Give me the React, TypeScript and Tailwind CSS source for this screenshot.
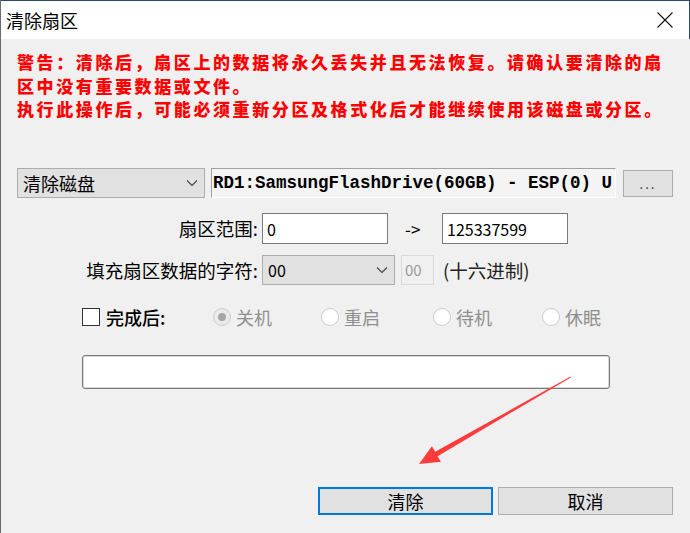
const ui = { fontFamily: '"Noto Sans CJK SC", "Noto Sans", sans-serif' }
const mono = { fontFamily: '"Liberation Mono", "DejaVu Sans Mono", monospace' }

function Chevron() {
  return (
    <svg width="12" height="8" viewBox="0 0 12 8" className="shrink-0">
      <polyline points="1,1.5 6,6.5 11,1.5" fill="none" stroke="#444" strokeWidth="1.1" />
    </svg>
  )
}

function Radio({ label, checked }: { label: string; checked?: boolean }) {
  return (
    <div className="flex items-center">
      <span
        className={`flex h-[18px] w-[18px] items-center justify-center rounded-full border border-[#cccccc] ${
          checked ? 'bg-[#eaeaea]' : 'bg-white'
        }`}
      >
        {checked && <span className="h-[8px] w-[8px] rounded-full bg-[#a6a6a6]" />}
      </span>
      <span className="ml-[5px] text-[18px] leading-none text-[#8f8f8f]">{label}</span>
    </div>
  )
}

export default function App() {
  return (
    <div
      className="relative flex h-[533px] w-[690px] flex-col overflow-hidden border-l border-[#6b6b6b] bg-[#f0f0f0] text-black"
      style={ui}
    >
      {/* title bar */}
      <div className="flex h-[39px] shrink-0 items-center justify-between border-t border-r border-[#2b4a6b] bg-white pl-[5px] pr-[16px]">
        <span className="text-[18px] leading-none">清除扇区</span>
        <svg width="16" height="16" viewBox="0 0 16 16">
          <path d="M0.5 0.5 L15.5 15.5 M15.5 0.5 L0.5 15.5" stroke="#111" strokeWidth="1.1" />
        </svg>
      </div>

      <div className="flex flex-col pl-[16px]">
        <div className="mt-[11px] whitespace-nowrap text-[17px] font-black leading-[23.5px] tracking-[2.6px] text-[#ff0000]">
          警告：清除后，扇区上的数据将永久丢失并且无法恢复。请确认要清除的扇
          <br />
          区中没有重要数据或文件。
          <br />
          执行此操作后，可能必须重新分区及格式化后才能继续使用该磁盘或分区。
        </div>

        {/* disk row */}
        <div className="mt-[47.5px] flex h-[30px] items-start">
          <div className="flex h-[30px] w-[188px] items-center justify-between border border-[#adadad] bg-[#e1e1e1] pl-[5px] pr-[6px]">
            <span className="text-[18px] leading-none">清除磁盘</span>
            <Chevron />
          </div>
          <div
            className="ml-[6px] flex h-[30px] w-[405px] items-center overflow-hidden whitespace-nowrap border-t border-l border-b border-r border-t-[#a0a0a0] border-l-[#a0a0a0] border-b-white border-r-white bg-[#f4f4f4] pl-[1px] text-[17.5px] font-bold"
            style={mono}
          >
            RD1:SamsungFlashDrive(60GB) - ESP(0) U
          </div>
          <div className="ml-[7px] mt-[2px] flex h-[27px] w-[50px] items-center justify-center border border-[#adadad] bg-[#e1e1e1] text-[13px] tracking-[2px] text-[#333]">
            ...
          </div>
        </div>

        {/* sector range */}
        <div className="mt-[15px] flex h-[31px] items-center">
          <span className="w-[245px] pr-[4px] text-right text-[18.5px] leading-none">扇区范围:</span>
          <div className="flex h-[31px] w-[126px] items-center border border-[#7a7a7a] bg-white pl-[4px] text-[16px]">0</div>
          <span className="ml-[17px] w-[20px] text-[17px] leading-none">-&gt;</span>
          <div className="ml-[17px] flex h-[31px] w-[126px] items-center border border-[#7a7a7a] bg-white pl-[4px] text-[16px]">
            125337599
          </div>
        </div>

        {/* fill char */}
        <div className="mt-[11px] flex h-[30px] items-center">
          <span className="w-[245px] pr-[4px] text-right text-[18.5px] leading-none">填充扇区数据的字符:</span>
          <div className="flex h-[30px] w-[133px] items-center justify-between border border-[#adadad] bg-[#e1e1e1] pl-[5px] pr-[6px]">
            <span className="text-[16px] leading-none">00</span>
            <Chevron />
          </div>
          <div className="ml-[6px] flex h-[30px] w-[33px] items-center border border-[#d9d9d9] bg-[#f0f0f0] pl-[3px] text-[15px] text-[#9a9a9a]">
            00
          </div>
          <span className="ml-[9px] text-[18.5px] leading-none text-[#222]">(十六进制)</span>
        </div>

        {/* after finish */}
        <div className="mt-[23px] flex h-[18px] items-center">
          <div className="ml-[65px] flex w-[131px] items-center">
            <span className="h-[18px] w-[18px] border border-[#333] bg-white" />
            <span className="ml-[6px] text-[18px] font-medium leading-none">完成后:</span>
          </div>
          <div className="w-[108px]">
            <Radio label="关机" checked />
          </div>
          <div className="w-[112px]">
            <Radio label="重启" />
          </div>
          <div className="w-[109px]">
            <Radio label="待机" />
          </div>
          <Radio label="休眠" />
        </div>

        {/* progress */}
        <div className="ml-[65px] mt-[29px] h-[34px] w-[528px] rounded-[3px] border border-[#7a7a7a] bg-white shadow-[inset_0_0_0_1px_#d8d8d8]" />

        {/* buttons */}
        <div className="mt-[98px] flex">
          <div className="ml-[301px] flex h-[28px] w-[175px] items-center justify-center border-2 border-[#0078d7] bg-[#e1e1e1] text-[18px] leading-none">
            清除
          </div>
          <div className="ml-[5px] flex h-[28px] w-[175px] items-center justify-center border border-[#adadad] bg-[#e1e1e1] text-[18px] leading-none">
            取消
          </div>
        </div>
      </div>

      {/* annotation arrow */}
      <svg className="pointer-events-none absolute left-[-1px] top-0" width="690" height="533">
        <polygon
          points="570.5,376.6 435.2,451.8 431.9,446.2 419,464 440.9,461.8 437.6,456.2 570.8,377.4"
          fill="#fe3b3b"
        />
      </svg>
    </div>
  )
}
